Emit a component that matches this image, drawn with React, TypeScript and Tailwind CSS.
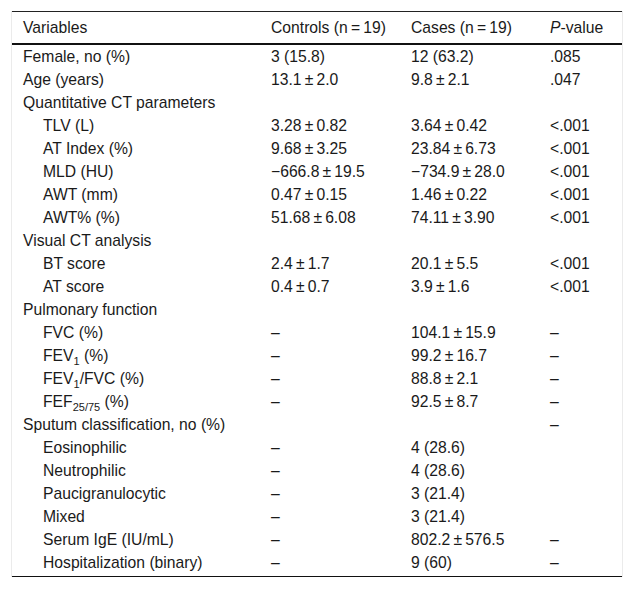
import React from "react";

type Row = { label: React.ReactNode; indent?: boolean; c?: string; k?: string; p?: string };

const T = "\u2009";
const pm = (a: string, b: string) => `${a}${T}±${T}${b}`;

const rows: Row[] = [
  { label: "Female, no (%)", c: "3 (15.8)", k: "12 (63.2)", p: ".085" },
  { label: "Age (years)", c: pm("13.1", "2.0"), k: pm("9.8", "2.1"), p: ".047" },
  { label: "Quantitative CT parameters" },
  { label: "TLV (L)", indent: true, c: pm("3.28", "0.82"), k: pm("3.64", "0.42"), p: "<.001" },
  { label: "AT Index (%)", indent: true, c: pm("9.68", "3.25"), k: pm("23.84", "6.73"), p: "<.001" },
  { label: "MLD (HU)", indent: true, c: pm("\u2212666.8", "19.5"), k: pm("\u2212734.9", "28.0"), p: "<.001" },
  { label: "AWT (mm)", indent: true, c: pm("0.47", "0.15"), k: pm("1.46", "0.22"), p: "<.001" },
  { label: "AWT% (%)", indent: true, c: pm("51.68", "6.08"), k: pm("74.11", "3.90"), p: "<.001" },
  { label: "Visual CT analysis" },
  { label: "BT score", indent: true, c: pm("2.4", "1.7"), k: pm("20.1", "5.5"), p: "<.001" },
  { label: "AT score", indent: true, c: pm("0.4", "0.7"), k: pm("3.9", "1.6"), p: "<.001" },
  { label: "Pulmonary function" },
  { label: "FVC (%)", indent: true, c: "–", k: pm("104.1", "15.9"), p: "–" },
  {
    label: (
      <>
        FEV<sub className="text-[11px] relative top-[4px]">1</sub> (%)
      </>
    ),
    indent: true,
    c: "–",
    k: pm("99.2", "16.7"),
    p: "–",
  },
  {
    label: (
      <>
        FEV<sub className="text-[11px] relative top-[4px]">1</sub>/FVC (%)
      </>
    ),
    indent: true,
    c: "–",
    k: pm("88.8", "2.1"),
    p: "–",
  },
  {
    label: (
      <>
        FEF<sub className="text-[11px] relative top-[4px]">25/75</sub> (%)
      </>
    ),
    indent: true,
    c: "–",
    k: pm("92.5", "8.7"),
    p: "–",
  },
  { label: "Sputum classification, no (%)", p: "–" },
  { label: "Eosinophilic", indent: true, c: "–", k: "4 (28.6)" },
  { label: "Neutrophilic", indent: true, c: "–", k: "4 (28.6)" },
  { label: "Paucigranulocytic", indent: true, c: "–", k: "3 (21.4)" },
  { label: "Mixed", indent: true, c: "–", k: "3 (21.4)" },
  { label: "Serum IgE (IU/mL)", indent: true, c: "–", k: pm("802.2", "576.5"), p: "–" },
  { label: "Hospitalization (binary)", indent: true, c: "–", k: "9 (60)", p: "–" },
];

export default function App() {
  return (
    <div className="w-[634px] h-[591px] bg-white pt-[11px] pl-[11px]" style={{ fontFamily: '"Liberation Sans", Arial, sans-serif' }}>
      <div className="w-[612px] border-x border-[#ebebeb] text-[15.7px] text-[#1a1a1a] leading-none">
        <div className="border-t border-[#222]">
          <div className="grid grid-cols-[248px_140px_139px_85px] h-[33px] items-center border-b-2 border-[#111]">
            <div className="pl-[11px]">Variables</div>
            <div className="pl-[11px]">Controls (n{T}={T}19)</div>
            <div className="pl-[11px]">Cases (n{T}={T}19)</div>
            <div className="pl-[11px]">
              <i>P</i>-value
            </div>
          </div>
          <div className="pb-[2px] border-b-[1.5px] border-[#111]">
            {rows.map((r, i) => (
              <div key={i} className="grid grid-cols-[248px_140px_139px_85px] h-[23px] items-center">
                <div className={r.indent ? "pl-[31px]" : "pl-[11px]"}>{r.label}</div>
                <div className="pl-[11px]">{r.c ?? ""}</div>
                <div className="pl-[11px]">{r.k ?? ""}</div>
                <div className="pl-[11px]">{r.p ?? ""}</div>
              </div>
            ))}
          </div>
        </div>
      </div>
    </div>
  );
}
